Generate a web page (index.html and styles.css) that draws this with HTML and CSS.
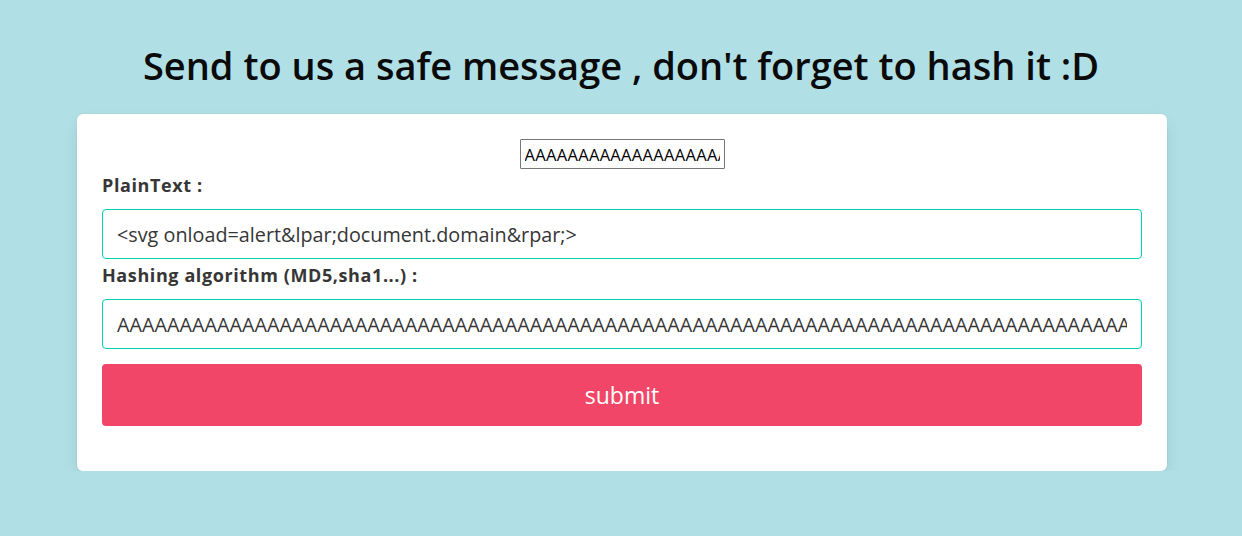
FILE: index.html
```html
<!DOCTYPE html>
<html lang="en">
<head>
<meta charset="utf-8">
<title>Safe message</title>
<link rel="stylesheet" href="styles.css">
</head>
<body>
  <h1 class="title">Send to us a safe message , don't forget to hash it :D</h1>
  <div class="box">
    <div class="top-row">
      <input class="raw-input" type="text" value="AAAAAAAAAAAAAAAAAAAAAAAAAAAAAA">
    </div>
    <label class="label">PlainText :</label>
    <input class="input" type="text" value="<svg onload=alert&amp;lpar;document.domain&amp;rpar;>">
    <label class="label">Hashing algorithm (MD5,sha1...) :</label>
    <input class="input" type="text" value="AAAAAAAAAAAAAAAAAAAAAAAAAAAAAAAAAAAAAAAAAAAAAAAAAAAAAAAAAAAAAAAAAAAAAAAAAAAAAAAAAAAAAAAAAAAAAAAAAAAAAAAA">
    <button class="button" type="button">submit</button>
  </div>
</body>
</html>
```

FILE: styles.css
```css
* { box-sizing: border-box; }
html, body { margin: 0; padding: 0; }
body {
  background: #b0e0e6;
  font-family: "Open Sans", "Noto Sans", sans-serif;
  color: #363636;
  padding-top: 38px;
}
.title {
  margin: 0;
  text-align: center;
  font-size: 38px;
  font-weight: 600;
  color: #0a0a0a;
  line-height: 54px;
  letter-spacing: 0;
}
.box {
  width: 1090px;
  margin: 22px 0 0 77px;
  background: #fff;
  border-radius: 6px;
  box-shadow: 0 8px 18px -4px rgba(10,10,10,0.16), 0 0 0 1px rgba(10,10,10,0.02);
  padding: 25px 25px 45px 25px;
  display: flex;
  flex-direction: column;
}
.top-row {
  display: flex;
  justify-content: center;
}
.raw-input {
  width: 205px;
  height: 30px;
  border: 1px solid #767676;
  border-radius: 1px;
  padding: 1px 4px;
  font-family: "Open Sans", sans-serif;
  font-size: 16.5px;
  letter-spacing: 0.3px;
  color: #000;
  margin: 0;
}
.label {
  display: block;
  font-weight: 700;
  font-size: 18px;
  line-height: 24px;
  letter-spacing: 0.6px;
  color: #363636;
  margin: 4px 0 12px 0;
}
.input {
  display: block;
  width: 100%;
  height: 50px;
  border: 1px solid #00d1b2;
  border-radius: 4px;
  padding: 0 14px;
  font-family: "Open Sans", sans-serif;
  font-size: 19.8px;
  color: #363636;
  background: #fff;
  margin: 0;
}
.button {
  margin-top: 15px;
  height: 62px;
  width: 100%;
  border: none;
  border-radius: 4px;
  background: #f14668;
  color: #fff;
  font-family: "Open Sans", sans-serif;
  font-size: 23px;
  cursor: pointer;
}
```
